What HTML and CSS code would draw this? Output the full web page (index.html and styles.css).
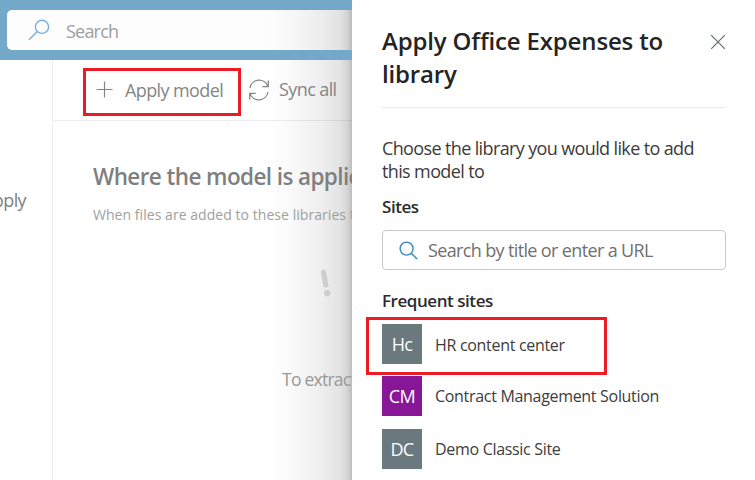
FILE: index.html
```html
<!DOCTYPE html>
<html lang="en">
<head>
<meta charset="utf-8">
<title>Apply model</title>
<link rel="stylesheet" href="styles.css">
</head>
<body>
<div class="app">
  <div class="page">
    <header class="topbar">
      <div class="topsearch">
        <svg width="22" height="22" viewBox="0 0 22 22" fill="none" stroke="#7badde" stroke-width="1.4"><circle cx="14" cy="7.8" r="6.6"/><path d="M9.4 12.4 1 20.8"/></svg>
        <span class="t search-label">Search</span>
      </div>
    </header>
    <div class="body">
      <nav class="side"><span class="t side-label">apply</span></nav>
      <main class="main">
        <div class="toolbar">
          <div class="apply">
            <svg width="18" height="18" viewBox="0 0 18 18" stroke="#858585" stroke-width="1.2"><path d="M8.5 .5v16M.5 8.5h16"/></svg>
            <span class="t apply-label">Apply model</span>
          </div>
          <svg class="sync" width="22" height="22" viewBox="0 0 22 22" fill="none" stroke="#858585" stroke-width="1.3"><path d="M2 9A9.2 9.2 0 0 1 19.8 7.4M20.3 1.6v6h-6M20 13A9.2 9.2 0 0 1 2.2 14.6M1.7 20.4v-6h6"/></svg>
          <span class="t sync-label">Sync all</span>
        </div>
        <h2 class="t main-title">Where the model is applied</h2>
        <p class="t main-sub">When files are added to these libraries they</p>
        <svg class="bang" width="16" height="32" viewBox="0 0 16 32"><path d="M5.5 5.3 7.8 18" stroke="#cecece" stroke-width="5.2" stroke-linecap="round"/><circle cx="9.2" cy="26.2" r="3.1" fill="#cecece"/></svg>
        <p class="t extract">To extract</p>
      </main>
    </div>
  </div>
  <aside class="panel">
    <div class="head">
      <h1 class="title"><span class="t title-a">Apply Office Expenses to</span><span class="t title-b">library</span></h1>
      <svg class="close" width="16" height="16" viewBox="0 0 16 16" stroke="#5c6670" stroke-width="1.1"><path d="m1.2 1.2 13.6 13.6M14.8 1.2 1.2 14.8"/></svg>
    </div>
    <p class="desc"><span class="t desc-a">Choose the library you would like to add</span><span class="t desc-b">this model to</span></p>
    <h3 class="t label sites">Sites</h3>
    <div class="field">
      <svg width="19" height="19" viewBox="0 0 19 19" fill="none" stroke="#3486bf" stroke-width="1.4"><circle cx="7.6" cy="7.6" r="6.5"/><path d="m12.3 12.3 5.8 5.8"/></svg>
      <span class="t field-label">Search by title or enter a URL</span>
    </div>
    <h3 class="t label frequent">Frequent sites</h3>
    <ul class="list">
      <li class="site picked"><span class="avatar">Hc</span><span class="t name">HR content center</span></li>
      <li class="site"><span class="avatar purple">CM</span><span class="t name">Contract Management Solution</span></li>
      <li class="site"><span class="avatar">DC</span><span class="t name">Demo Classic Site</span></li>
    </ul>
  </aside>
</div>
</body>
</html>
```
FILE: styles.css
```css
* { box-sizing: border-box; margin: 0; padding: 0; }
body { width: 755px; height: 480px; overflow: hidden; background: #fff; font-family: "Open Sans", "Noto Sans", sans-serif; }
.t { white-space: nowrap; }
svg { display: block; flex: none; }
.app { display: flex; width: 755px; height: 480px; }
.page { width: 352px; flex: none; overflow: hidden; display: flex; flex-direction: column; }
.topbar { height: 60px; flex: none; background: #74a8c9; padding: 10px 0 10px 7px; }
.topsearch, .body {
  --shade: linear-gradient(to right, transparent 0, transparent calc(100% - 90px), rgba(0,0,0,.015) calc(100% - 65px), rgba(0,0,0,.065) calc(100% - 30px), rgba(0,0,0,.11) calc(100% - 12px), rgba(0,0,0,.16) calc(100% - 5px), rgba(0,0,0,.26) 100%);
  background: var(--shade), #fdfdfd;
}
.topsearch { height: 40px; border-radius: 5px 0 0 5px; display: flex; align-items: center; padding-left: 21px; gap: 16px; }
.search-label { font-size: 18px; letter-spacing: -.8px; color: #9e9e9e; padding-top: 2px; }
.body { flex: 1; display: flex; background: var(--shade), #fff; }
.side { width: 53px; flex: none; border-right: 1px solid #eee; overflow: hidden; display: flex; justify-content: flex-end; padding: 128px 26px 0 0; }
.side-label { font-size: 18px; line-height: 24px; letter-spacing: -.6px; color: #808080; }
.main { flex: 1; min-width: 0; }
.toolbar { height: 61px; border-bottom: 1px solid rgba(0,0,0,.07); display: flex; padding: 8px 0 0 30px; }
.apply { width: 158px; height: 48px; border: 3px solid #ed1c24; display: flex; align-items: center; padding: 0 0 5px 10px; gap: 11px; }
.apply-label, .sync-label { font-size: 18px; line-height: 24px; letter-spacing: -.6px; color: #858585; }
.sync { margin: 11px 9px 0 7px; }
.sync-label { margin-top: 9px; }
.main-title { margin: 40px 0 0 40px; font-size: 22.5px; line-height: 32px; font-weight: 600; letter-spacing: -.6px; color: #7f7f7f; }
.main-sub { margin: 12px 0 0 40px; font-size: 14px; line-height: 20px; letter-spacing: .05px; color: #a0a0a0; }
.bang { margin: 42px 0 0 265px; }
.extract { margin: 68px 0 0 229px; font-size: 17.5px; line-height: 24px; letter-spacing: -.75px; color: #999; }
.panel { flex: 1; background: #fff; padding: 24px 29px 0 30px; color: #242424; }
.head { height: 84px; border-bottom: 1px solid #eaeaea; display: flex; justify-content: space-between; }
.title { font-size: 24px; line-height: 33px; font-weight: 600; letter-spacing: -.15px; }
.title span, .desc span { display: block; width: max-content; }
.close { margin-top: 10px; }
.desc { margin-top: 29px; font-size: 18px; line-height: 23px; letter-spacing: -.63px; color: #3b3b3b; }
.label { width: max-content; font-size: 17px; line-height: 24px; font-weight: 600; letter-spacing: -.45px; color: #2b2b2b; }
.sites { margin-top: 12px; }
.field { margin-top: 11px; height: 40px; border: 1px solid #c9c9c9; border-radius: 4px; display: flex; align-items: center; padding-left: 16px; gap: 10px; }
.field-label { font-size: 18px; letter-spacing: -.64px; color: #707070; }
.frequent { margin-top: 19px; }
.list { list-style: none; margin: 4px 0 0 -16px; }
.site { height: 53px; padding-left: 16px; display: flex; align-items: center; gap: 13px; }
.picked { width: 241px; height: 58px; border: 3px solid #ed1c24; padding: 0 0 4px 13px; margin-bottom: -6px; }
.avatar { width: 40px; height: 40px; flex: none; background: #69797e; color: #fff; font-size: 18px; line-height: 41px; letter-spacing: -.6px; text-align: center; }
.purple { background: #881798; }
.name { font-size: 16px; letter-spacing: -.31px; color: #3c3c3c; padding-top: 1px; }
```
